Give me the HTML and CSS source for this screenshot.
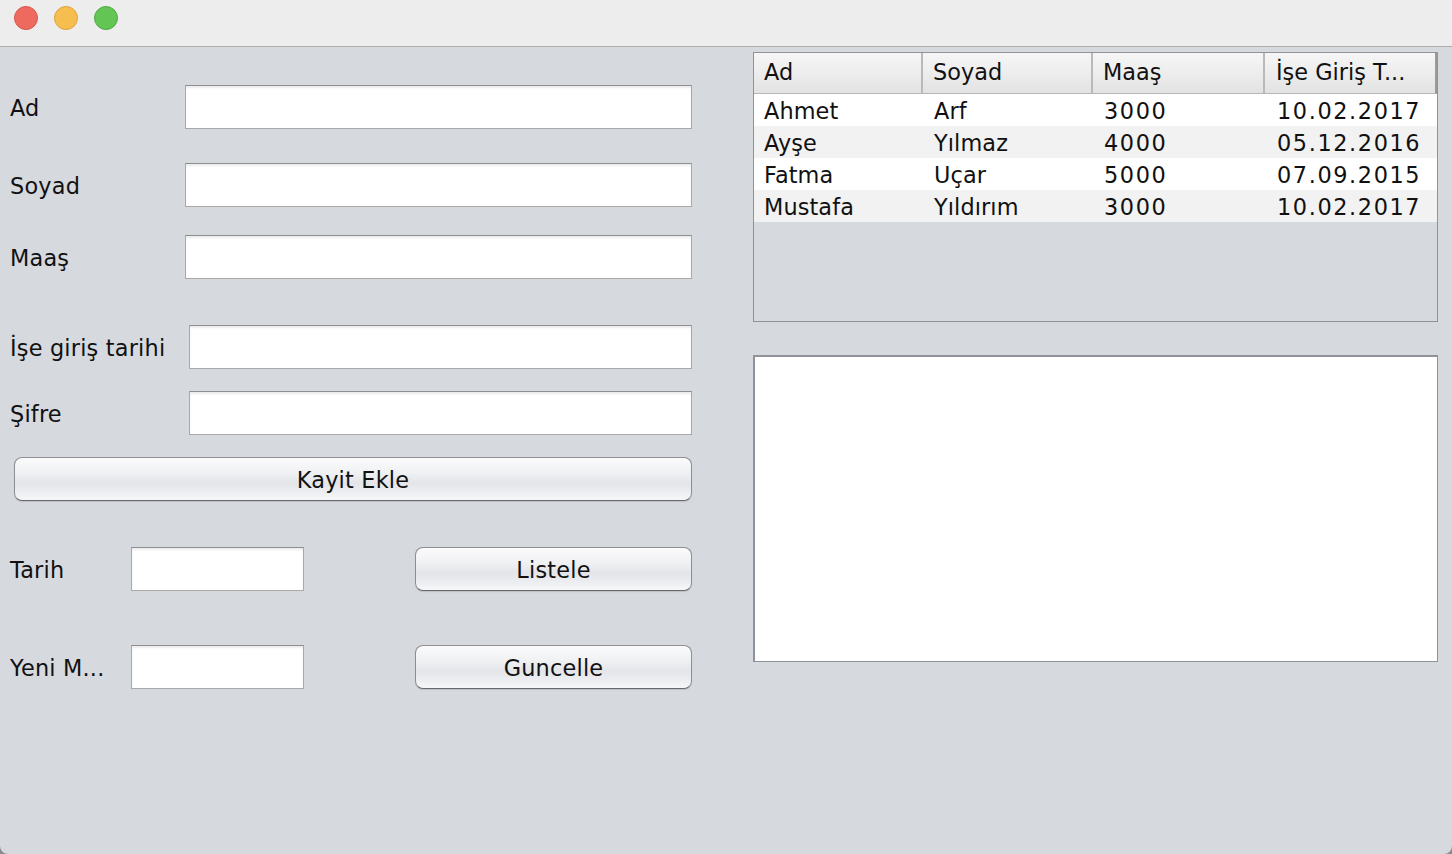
FILE: index.html
```html
<!DOCTYPE html>
<html lang="tr">
<head>
<meta charset="utf-8">
<title>Personel</title>
<link rel="stylesheet" href="styles.css">
</head>
<body>
<div class="window">
  <div class="titlebar">
    <span class="light red"></span>
    <span class="light yellow"></span>
    <span class="light green"></span>
  </div>
  <div class="content">
    <div class="left">
      <div class="row r-ad"><label class="lbl w175">Ad</label><div class="field grow"></div></div>
      <div class="row r-soyad"><label class="lbl w175">Soyad</label><div class="field grow"></div></div>
      <div class="row r-maas"><label class="lbl w175">Maaş</label><div class="field grow"></div></div>
      <div class="row r-ise"><label class="lbl w179">İşe giriş tarihi</label><div class="field grow"></div></div>
      <div class="row r-sifre"><label class="lbl w179">Şifre</label><div class="field grow"></div></div>
      <div class="row r-kayit"><button class="btn wide">Kayit Ekle</button></div>
      <div class="row r-tarih"><label class="lbl w121">Tarih</label><div class="field small"></div><button class="btn half">Listele</button></div>
      <div class="row r-yeni"><label class="lbl w121">Yeni M...</label><div class="field small"></div><button class="btn half">Guncelle</button></div>
    </div>
    <div class="right">
      <div class="table">
        <div class="thead">
          <div class="th">Ad</div>
          <div class="th">Soyad</div>
          <div class="th">Maaş</div>
          <div class="th last">İşe Giriş T...</div>
        </div>
        <div class="tr"><div class="td">Ahmet</div><div class="td">Arf</div><div class="td num">3000</div><div class="td num">10.02.2017</div></div>
        <div class="tr alt"><div class="td">Ayşe</div><div class="td">Yılmaz</div><div class="td num">4000</div><div class="td num">05.12.2016</div></div>
        <div class="tr"><div class="td">Fatma</div><div class="td">Uçar</div><div class="td num">5000</div><div class="td num">07.09.2015</div></div>
        <div class="tr alt"><div class="td">Mustafa</div><div class="td">Yıldırım</div><div class="td num">3000</div><div class="td num">10.02.2017</div></div>
      </div>
      <div class="textarea"></div>
    </div>
  </div>
</div>
</body>
</html>
```

FILE: styles.css
```css
* { box-sizing: border-box; }
html, body {
  margin: 0;
  padding: 0;
  width: 1452px;
  height: 854px;
  overflow: hidden;
  background: #8a8a8a;
  font-family: "DejaVu Sans", "Liberation Sans", sans-serif;
  font-size: 22.4px;
  color: #111;
}
.window {
  width: 1452px;
  height: 854px;
  display: flex;
  flex-direction: column;
  background: #d6d9de;
  border-radius: 0 0 8px 8px;
  overflow: hidden;
}
.titlebar {
  height: 47px;
  flex: none;
  background: #ededed;
  border-bottom: 1px solid #adadad;
  display: flex;
  align-items: flex-start;
  padding: 6px 0 0 14px;
  gap: 16px;
}
.light {
  width: 24px;
  height: 24px;
  border-radius: 50%;
  display: block;
}
.red { background: #ee6a5f; border: 1px solid #d9554b; }
.yellow { background: #f6be4f; border: 1px solid #dea33c; }
.green { background: #62c554; border: 1px solid #50ab42; }

.content {
  flex: 1;
  display: flex;
}
.left {
  width: 753px;
  flex: none;
  padding: 38px 61px 0 10px;
  display: flex;
  flex-direction: column;
}
.row {
  display: flex;
  align-items: center;
  height: 44px;
}
.r-soyad { margin-top: 34px; }
.r-maas { margin-top: 28px; }
.r-ise { margin-top: 46px; }
.r-sifre { margin-top: 22px; }
.r-kayit { margin-top: 22px; padding-left: 4px; }
.r-tarih { margin-top: 46px; }
.r-yeni { margin-top: 54px; }

.lbl {
  flex: none;
  white-space: nowrap;
  line-height: 1;
  padding-top: 2px;
  letter-spacing: 0.2px;
}
.w175 { width: 175px; }
.w179 { width: 179px; }
.w121 { width: 121px; }

.field {
  height: 44px;
  background: #fff;
  border: 1px solid #a9a9a9;
  border-top-color: #8e8e8e;
  box-shadow: inset 0 2px 2px rgba(0,0,0,0.08);
}
.grow { flex: 1; }
.small { width: 173px; flex: none; }

.btn {
  font-family: inherit;
  font-size: 22.4px;
  color: #111;
  height: 44px;
  border: 1px solid #8f8f93;
  border-bottom-color: #68686c;
  border-radius: 8px;
  background: linear-gradient(to bottom, #fbfbfc 0%, #f0f1f3 35%, #e4e5e9 60%, #eeeff2 85%, #f8f8f9 100%);
  box-shadow: 0 1px 1px rgba(0,0,0,0.12);
  padding: 2px 0 0 0;
  line-height: 1;
  letter-spacing: 0.2px;
}
.wide { flex: 1; }
.half { width: 277px; margin-left: auto; }

.right {
  flex: 1;
  padding: 5px 15px 0 0;
  display: flex;
  flex-direction: column;
}
.table {
  height: 270px;
  border: 1px solid #90929a;
  background: #d6d9de;
  width: 685px;
}
.thead {
  display: grid;
  grid-template-columns: 169px 170px 172px 1fr;
  height: 41px;
  background: linear-gradient(to bottom, #f6f6f6 0%, #ececec 55%, #e2e2e2 100%);
  border-bottom: 1px solid #b6b6b6;
  border-right: 2px solid #9a9a9a;
}
.th {
  display: flex;
  align-items: center;
  padding: 0 0 3px 10px;
  border-right: 2px solid #b9b9b9;
  white-space: nowrap;
}
.th.last { border-right: none; padding-left: 11px; }
.tr {
  display: grid;
  grid-template-columns: 169px 170px 172px 1fr;
  height: 32px;
  background: #fff;
}
.tr:first-of-type { margin-top: 1px; }
.tr.alt { background: #f2f2f2; }
.td {
  display: flex;
  align-items: center;
  padding: 1px 0 0 10px;
  white-space: nowrap;
  letter-spacing: 0.1px;
}
.td:nth-child(2) { padding-left: 11px; }
.td:nth-child(3) { padding-left: 11px; }
.td:nth-child(4) { padding-left: 12px; }
.td.num { letter-spacing: 1.6px; }
.textarea {
  margin-top: 33px;
  width: 685px;
  height: 307px;
  background: #fff;
  border: 1px solid #90929a;
  border-top-width: 2px;
  border-left-width: 2px;
}
```
